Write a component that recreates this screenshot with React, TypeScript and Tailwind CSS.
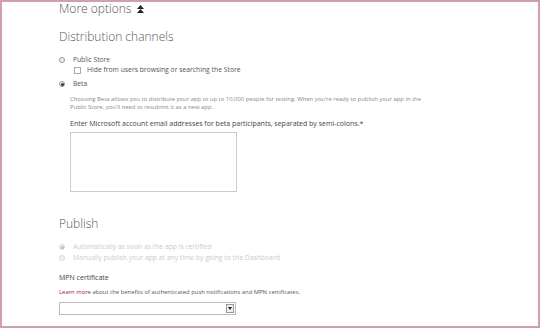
import React from 'react';

const Radio = ({ checked, disabled }: { checked?: boolean; disabled?: boolean }) => (
  <span
    className={`flex h-[6px] w-[6px] items-center justify-center rounded-full border ${
      disabled ? 'border-[#d8d8d8] bg-[#f4f4f4]' : 'border-[#9a9a9a] bg-[#eee]'
    }`}
  >
    {checked && <span className={`h-[3px] w-[3px] rounded-full ${disabled ? 'bg-[#bbb]' : 'bg-[#333]'}`} />}
  </span>
);

const App = () => {
  return (
    <div
      className="h-[328px] w-[540px] overflow-hidden border-2 border-[#cfa0a9] bg-white text-[#555]"
      style={{ fontFamily: '"Open Sans", "Liberation Sans", sans-serif' }}
    >
      <div className="flex flex-col pl-[57px]">
        <div className="mt-[-1px] flex items-center gap-[6px] text-[12px] font-light leading-[16px] text-[#555]">
          <span>More options</span>
          <svg width="7" height="9" viewBox="0 0 7 9" className="mt-[1px]">
            <path d="M3.5 0 L7 4 H0 Z" fill="#222" />
            <path d="M3.5 4 L7 8 H0 Z" fill="#222" />
          </svg>
        </div>

        <div className="mt-[12px] text-[12px] font-light leading-[16px] text-[#555]">Distribution channels</div>

        <div className="mt-[10px] flex items-center gap-[8px] text-[6.7px] leading-[10px]">
          <Radio />
          <span>Public Store</span>
        </div>
        <div className="flex items-center gap-[6px] pl-[15px] text-[6.8px] leading-[10px]">
          <span className="h-[7px] w-[7px] border border-[#aaa] bg-white" />
          <span>Hide from users browsing or searching the Store</span>
        </div>
        <div className="mt-[4px] flex items-center gap-[8px] text-[6.7px] leading-[10px]">
          <Radio checked />
          <span>Beta</span>
        </div>

        <div className="mt-[6px] pl-[11px] text-[5.9px] leading-[8px] text-[#888]">
          <p>
            Choosing Beta allows you to distribute your app to up to 10,000 people for testing. When you're ready to publish your app in the
          </p>
          <p>Public Store, you'll need to resubmit it as a new app.</p>
        </div>

        <div className="mt-[8px] pl-[11px] text-[7px] leading-[10px] text-[#444]">
          Enter Microsoft account email addresses for beta participants, separated by semi-colons.*
        </div>
        <div className="ml-[11px] mt-[3px] h-[60px] w-[167px] border border-[#ccc] bg-white" />

        <div className="mt-[24px] text-[12px] font-light leading-[16px] text-[#555]">Publish</div>

        <div className="mt-[10px] flex items-center gap-[8px] text-[6.8px] leading-[10px] text-[#ccc]">
          <Radio checked disabled />
          <span>Automatically as soon as the app is certified</span>
        </div>
        <div className="mt-[1px] flex items-center gap-[8px] text-[6.8px] leading-[10px] text-[#ccc]">
          <Radio disabled />
          <span>Manually publish your app at any time by going to the Dashboard</span>
        </div>

        <div className="mt-[10px] text-[7px] leading-[10px] text-[#444]">MPN certificate</div>
        <div className="mt-[4px] text-[5.9px] leading-[10px] text-[#555]">
          <span className="text-[#9b2335]">Learn more</span> about the benefits of authenticated push notifications and MPN certificates.
        </div>
        <div className="mt-[5px] flex h-[13px] w-[177px] items-stretch border border-[#bbb] bg-white">
          <div className="flex-1" />
          <div className="m-[1px] flex w-[8px] items-center justify-center border border-[#999] bg-[#eee]">
            <svg width="4" height="3" viewBox="0 0 4 3">
              <path d="M0 0 H4 L2 3 Z" fill="#222" />
            </svg>
          </div>
        </div>
      </div>
    </div>
  );
};

export default App;
